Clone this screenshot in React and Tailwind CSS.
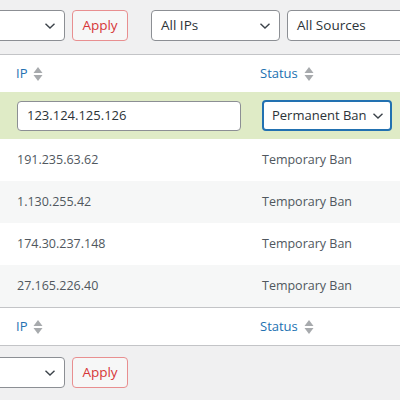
const rows = [
  { ip: "191.235.63.62", status: "Temporary Ban" },
  { ip: "1.130.255.42", status: "Temporary Ban" },
  { ip: "174.30.237.148", status: "Temporary Ban" },
  { ip: "27.165.226.40", status: "Temporary Ban" },
];

const Chevron = ({ className = "" }) => (
  <svg width="12" height="8" viewBox="0 0 12 8" className={className}>
    <path d="M1.5 1.8 L6 6 L10.5 1.8" fill="none" stroke="#3c434a" strokeWidth="1.4" />
  </svg>
);

const SortIcon = () => (
  <svg width="10" height="16" viewBox="0 0 10 16" className="ml-[6px]">
    <path d="M5 1 L9.5 7 L0.5 7 Z" fill="#a7aaad" />
    <path d="M0.5 9 L9.5 9 L5 15 Z" fill="#a7aaad" />
  </svg>
);

const FakeSelect = ({ label, className = "" }) => (
  <div
    className={`flex items-center justify-between h-[31px] bg-white border border-[#8c8f94] rounded-[4px] pl-[9px] pr-[8px] text-[13.5px] text-[#2c3338] ${className}`}
  >
    <span className="whitespace-nowrap">{label}</span>
    <Chevron />
  </div>
);

const ApplyButton = () => (
  <button className="h-[31px] w-[56px] rounded-[4px] border border-[#e88f90] bg-[#f6f7f7] text-[13.5px] text-[#d63638]">
    Apply
  </button>
);

const HeaderRow = () => (
  <div className="grid grid-cols-[260px_1fr] h-[37px] items-center bg-white">
    <div className="flex items-center pl-[16px] text-[13px] text-[#2271b1]">
      IP
      <SortIcon />
    </div>
    <div className="flex items-center text-[13px] text-[#2271b1]">
      Status
      <SortIcon />
    </div>
  </div>
);

export default function App() {
  return (
    <div
      className="w-[400px] h-[400px] overflow-hidden bg-[#f0f0f1]"
      style={{ fontFamily: '"Open Sans", "Noto Sans", sans-serif' }}
    >
      {/* top bulk actions + filters */}
      <div className="flex items-start h-[54px] pt-[10px]">
        <FakeSelect label="" className="w-[100px] -ml-[35px] shrink-0" />
        <div className="ml-[7px] shrink-0">
          <ApplyButton />
        </div>
        <FakeSelect label="All IPs" className="w-[129px] ml-[23px] shrink-0" />
        <FakeSelect label="All Sources" className="w-[140px] ml-[7px] shrink-0" />
      </div>

      <div className="border-y border-[#c3c4c7]">
        <HeaderRow />

        {/* editing row */}
        <div className="grid grid-cols-[260px_1fr] h-[47px] items-center bg-[#dfebc6]">
          <div className="pl-[17px]">
            <div className="w-[224px] h-[30px] flex items-center bg-white border border-[#8c8f94] rounded-[4px] px-[9px] text-[13px] text-[#2c3338]">
              123.124.125.126
            </div>
          </div>
          <div className="pl-[2px]">
            <div className="w-[130px] h-[31px] flex items-center justify-between bg-white border-2 border-[#2271b1] rounded-[4px] pl-[8px] pr-[6px] text-[13px] text-[#2c3338]">
              <span className="whitespace-nowrap">Permanent Ban</span>
              <Chevron />
            </div>
          </div>
        </div>

        {rows.map((r, i) => (
          <div
            key={r.ip}
            className={`grid grid-cols-[260px_1fr] h-[42px] items-center text-[12.5px] text-[#50575e] ${
              i % 2 === 0 ? "bg-white" : "bg-[#f6f7f7]"
            }`}
          >
            <div className="pl-[17px]">{r.ip}</div>
            <div className="pl-[2px]">{r.status}</div>
          </div>
        ))}

        <div className="border-t border-[#c3c4c7]">
          <HeaderRow />
        </div>
      </div>

      {/* bottom bulk actions */}
      <div className="flex items-start pt-[11px]">
        <FakeSelect label="" className="w-[100px] -ml-[35px] shrink-0" />
        <div className="ml-[7px] shrink-0">
          <ApplyButton />
        </div>
      </div>
    </div>
  );
}
